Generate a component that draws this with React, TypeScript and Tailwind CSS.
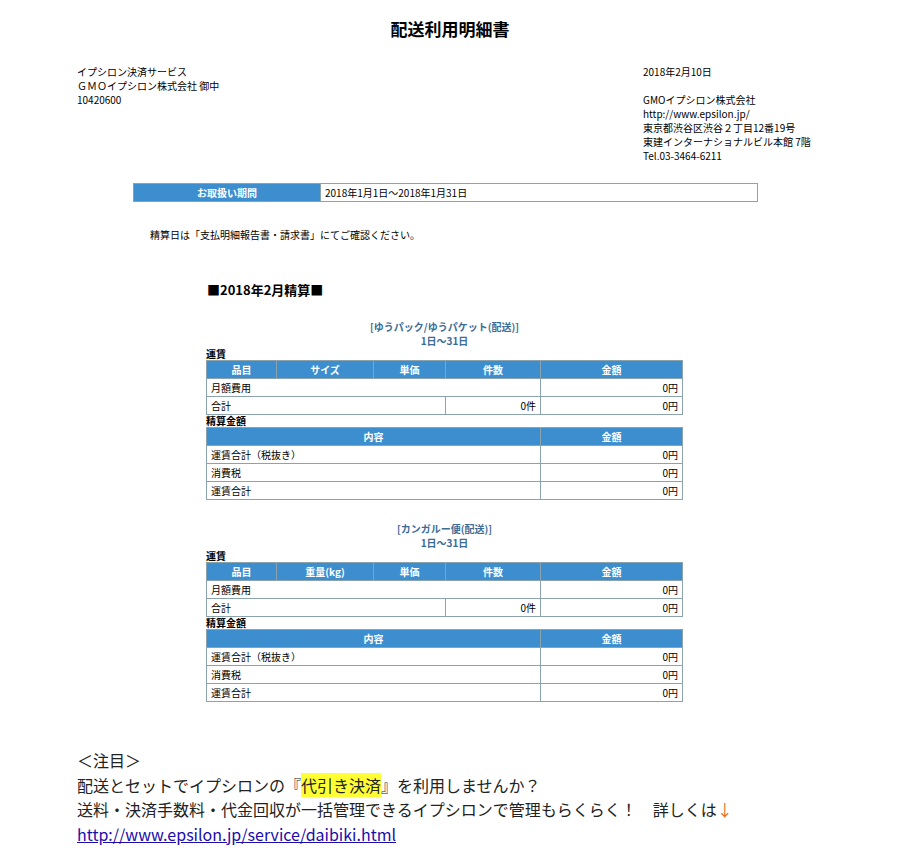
const F = { fontFamily: '"Noto Sans CJK JP","Noto Sans",sans-serif' };
const H = "bg-[#3d8ecf] text-white font-bold text-center border border-[#8aa3ad] h-[18px] p-0";
const C = "border border-[#8aa3ad] h-[18px] px-1 py-0";

function Block({ title, col2 }: { title: string; col2: string }) {
  return (
    <div className="w-[477px] text-[10px] leading-[12px]">
      <div className="text-center text-[#3b6c96] font-bold leading-[14px]">{title}<br />1日～31日</div>
      <div className="font-bold">運賃</div>
      <table className="w-full border-collapse">
        <tbody>
          <tr>
            <td className={H + " w-[70px]"}>品目</td>
            <td className={H + " w-[97px]"}>{col2}</td>
            <td className={H + " w-[72px]"}>単価</td>
            <td className={H + " w-[95px]"}>件数</td>
            <td className={H}>金額</td>
          </tr>
          <tr><td className={C} colSpan={4}>月額費用</td><td className={C + " text-right"}>0円</td></tr>
          <tr><td className={C} colSpan={3}>合計</td><td className={C + " text-right"}>0件</td><td className={C + " text-right"}>0円</td></tr>
        </tbody>
      </table>
      <div className="font-bold">精算金額</div>
      <table className="w-full border-collapse">
        <tbody>
          <tr><td className={H + " w-[334px]"}>内容</td><td className={H}>金額</td></tr>
          {["運賃合計（税抜き）", "消費税", "運賃合計"].map((t) => (
            <tr key={t}><td className={C}>{t}</td><td className={C + " text-right"}>0円</td></tr>
          ))}
        </tbody>
      </table>
    </div>
  );
}

export default function App() {
  return (
    <div style={F} className="w-[900px] h-[848px] bg-white text-black relative">
      <div className="pt-[17px] text-center font-bold text-[17px] leading-[24px]">配送利用明細書</div>
      <div className="flex justify-between pl-[77px] pr-[87px] mt-[24px] text-[10px] leading-[14px]">
        <div>イプシロン決済サービス<br />ＧＭＯイプシロン株式会社 御中<br />10420600</div>
        <div className="w-[170px]">2018年2月10日<br /><br />GMOイプシロン株式会社<br />http://www.epsilon.jp/<br />東京都渋谷区渋谷２丁目12番19号<br />東建インターナショナルビル本館 7階<br />Tel.03-3464-6211</div>
      </div>
      <table className="ml-[133px] mt-[20px] w-[625px] border-collapse text-[10px]">
        <tbody><tr>
          <td className="bg-[#3d8ecf] text-white font-bold text-center w-[187px] h-[18px] border border-[#8aa3ad] p-0">お取扱い期間</td>
          <td className="border border-[#8aa3ad] px-1 py-0 h-[18px]">2018年1月1日～2018年1月31日</td>
        </tr></tbody>
      </table>
      <div className="ml-[150px] mt-[26px] text-[10px] leading-[14px]">精算日は「支払明細報告書・請求書」にてご確認ください。</div>
      <div className="ml-[207px] mt-[39px] font-bold text-[13px] leading-[18px]">■2018年2月精算■</div>
      <div className="ml-[206px] mt-[21px]"><Block title="[ゆうパック/ゆうパケット(配送)]" col2="サイズ" /></div>
      <div className="ml-[206px] mt-[22px]"><Block title="[カンガルー便(配送)]" col2="重量(kg)" /></div>
      <div className="ml-[77px] mt-[46px] text-[16px] leading-[24.5px] text-[#222]">
        <div>＜注目＞</div>
        <div>配送とセットでイプシロンの『<span className="bg-[#ffff33]">代引き決済</span>』を利用しませんか？</div>
        <div>送料・決済手数料・代金回収が一括管理できるイプシロンで管理もらくらく！　詳しくは<span className="text-[#e07020]">↓</span></div>
        <div><a className="text-[#1a0dab] underline" href="#">http://www.epsilon.jp/service/daibiki.html</a></div>
      </div>
    </div>
  );
}
